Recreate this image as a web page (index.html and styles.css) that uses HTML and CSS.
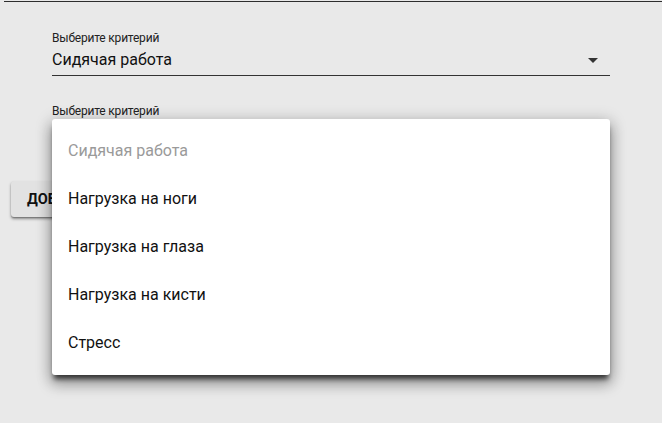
FILE: index.html
```html
<!DOCTYPE html>
<html lang="ru">
<head>
<meta charset="utf-8">
<link rel="stylesheet" href="styles.css">
</head>
<body>
<div class="topline"></div>
<div class="form">
  <div class="field">
    <div class="label">Выберите критерий</div>
    <div class="select">
      <span class="value">Сидячая работа</span>
      <svg class="arrow" width="10" height="5" viewBox="0 0 10 5"><path d="M0 0 L10 0 L5 5 Z" fill="#333"/></svg>
    </div>
  </div>
  <div class="field field2">
    <div class="label">Выберите критерий</div>
    <div class="select"><span class="value"></span></div>
  </div>
</div>
<div class="actions">
  <button class="btn">Добавить</button>
</div>
<ul class="menu">
  <li class="item disabled">Сидячая работа</li>
  <li class="item">Нагрузка на ноги</li>
  <li class="item">Нагрузка на глаза</li>
  <li class="item">Нагрузка на кисти</li>
  <li class="item">Стресс</li>
</ul>
</body>
</html>
```
FILE: styles.css
```css
html, body {
  margin: 0;
  padding: 0;
}
body {
  background: #e9e9e9;
  font-family: Roboto, "Noto Sans", sans-serif;
  color: #111;
  width: 662px;
  height: 423px;
  overflow: hidden;
  position: relative;
}
.topline {
  margin: 1px 0 0 4px;
  border-top: 1px solid #2e2e2e;
}
.form {
  padding: 29px 0 0 52px;
  width: 558px;
}
.field {
  display: flex;
  flex-direction: column;
}
.label {
  font-size: 12px;
  line-height: 14px;
  color: #222;
  letter-spacing: -0.2px;
}
.select {
  height: 30px;
  display: flex;
  align-items: center;
  justify-content: space-between;
  border-bottom: 1px solid #333;
}
.value {
  font-size: 16px;
  color: #111;
  padding-bottom: 1px;
}
.arrow {
  margin-right: 12px;
}
.field2 {
  margin-top: 28px;
}
.actions {
  padding: 32px 0 0 11px;
}
.btn {
  height: 36px;
  padding: 0 16px;
  background: #e2e2e2;
  border: none;
  border-radius: 3px;
  font-family: Roboto, sans-serif;
  font-weight: 700;
  font-size: 14.5px;
  text-transform: uppercase;
  color: #111;
  box-shadow: 0 2px 3px rgba(0,0,0,0.4), 0 1px 1px rgba(0,0,0,0.2);
}
.menu {
  position: absolute;
  left: 52px;
  top: 119px;
  width: 558px;
  margin: 0;
  padding: 8px 0;
  list-style: none;
  background: #fff;
  border-radius: 3px;
  box-shadow: 0 6px 5px -2px rgba(0,0,0,0.65), 0 9px 14px 1px rgba(0,0,0,0.25), 0 3px 16px 2px rgba(0,0,0,0.2);
}
.item {
  height: 48px;
  line-height: 48px;
  padding: 0 16px;
  font-size: 16px;
  color: #111;
}
.item.disabled {
  color: #9a9a9a;
}
```
